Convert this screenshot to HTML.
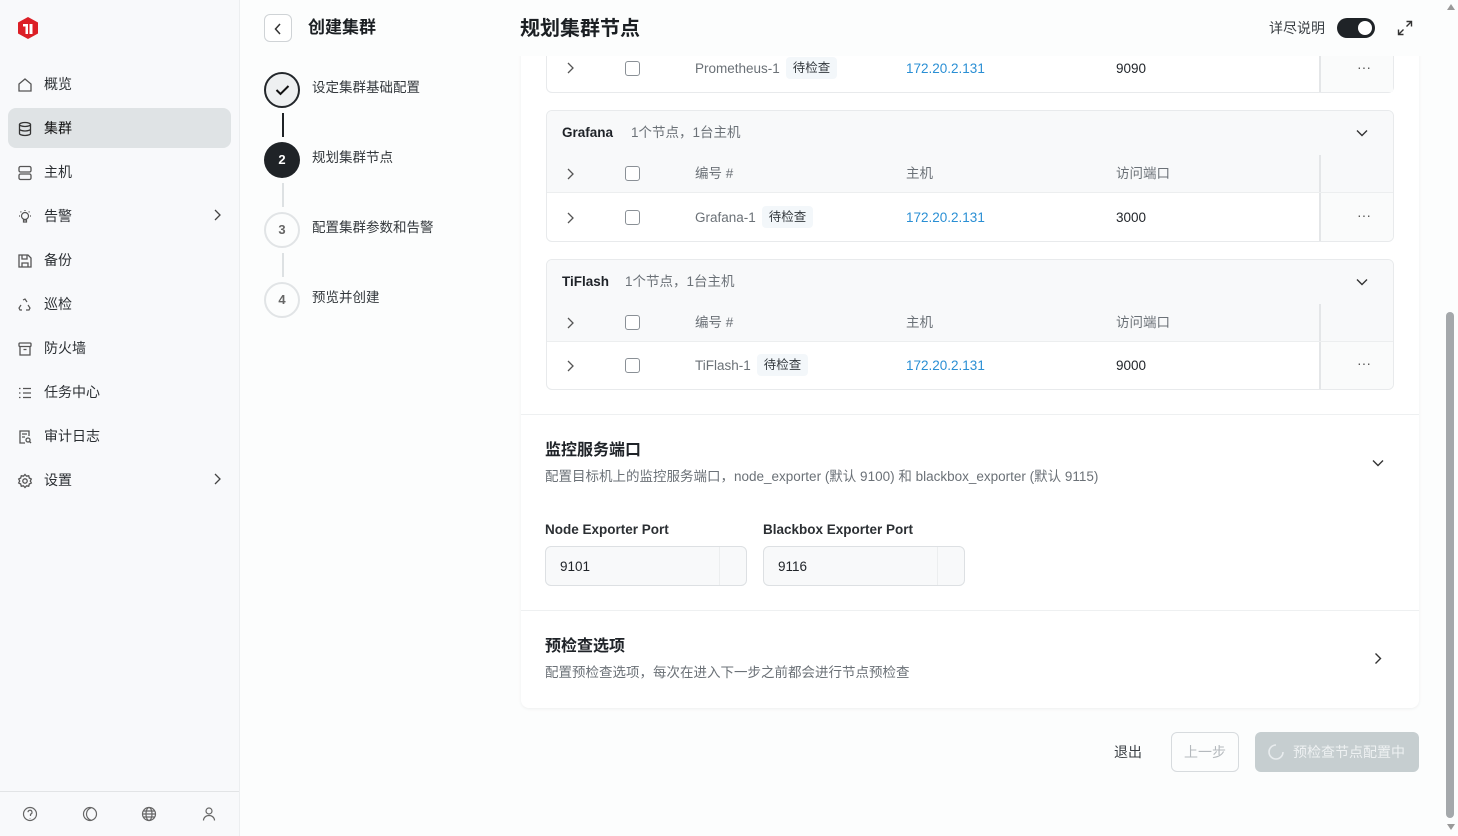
<!DOCTYPE html>
<html><head><meta charset="utf-8"><style>
*{box-sizing:border-box;margin:0;padding:0}
body{width:1458px;height:836px;overflow:hidden;background:#fcfdfd;font-family:"Liberation Sans","Noto Sans CJK SC",sans-serif;color:#1f2328;position:relative;font-size:14px}
.a{position:absolute}
.side{left:0;top:0;width:240px;height:836px;background:#f8f9fb;border-right:1px solid #eceef0}
.nav{left:8px;width:223px;height:40px;border-radius:8px;display:flex;align-items:center;padding-left:36px;font-size:14px;color:#2b2f33}
.nav svg{position:absolute;left:9px;top:13px}
.nav .chev{left:auto;right:10px}
.card{background:#fff;border:1px solid #e8eaec;border-radius:6px}
.muted{color:#6b7177}
.blue{color:#2a8fd4}
.tag{display:inline-block;background:#f3f7fa;border-radius:4px;padding:2px 7px;font-size:12.5px;color:#33383d;margin-left:6px;line-height:18px;vertical-align:top}
.cb{width:15px;height:15px;border:1px solid #8a9096;border-radius:3px;background:#fff}
.row{position:absolute;left:0;right:0;font-size:13.5px;line-height:18px}
.row > *{position:absolute}
.sticky{position:absolute;right:0;width:74px;top:0;bottom:0;border-left:2px solid #e4e6e8}
.dots{position:absolute;left:36px;color:#555;font-size:14px;line-height:10px}
</style></head><body>
<div class="a side">
 <svg class="a" style="left:17px;top:16px" width="22" height="24" viewBox="0 0 22 24"><path d="M11 1 L21 6.5 V17.5 L11 23 L1 17.5 V6.5Z" fill="#dc1f26"/><path d="M6 8 H11 V18 H8.5 V10.5 H6Z M12.5 8 H15.5 V18 H12.5Z" fill="#fff"/></svg>
 <div class="a nav" style="top:64px"><svg width="16" height="16" viewBox="0 0 16 16" fill="none" stroke="#555" stroke-width="1.3"><path d="M2 7 L8 2 L14 7 V14 H2Z"/></svg>概览</div>
 <div class="a nav" style="top:108px;background:#dfe3e5;color:#111"><svg width="16" height="16" viewBox="0 0 16 16" fill="none" stroke="#333" stroke-width="1.3"><ellipse cx="8" cy="3.5" rx="5.5" ry="2"/><path d="M2.5 3.5V12.5c0 1.1 2.5 2 5.5 2s5.5-.9 5.5-2V3.5M2.5 8c0 1.1 2.5 2 5.5 2s5.5-.9 5.5-2"/></svg>集群</div>
 <div class="a nav" style="top:152px"><svg width="16" height="16" viewBox="0 0 16 16" fill="none" stroke="#555" stroke-width="1.3"><rect x="2" y="1.5" width="12" height="5.5" rx="1.5"/><rect x="2" y="9" width="12" height="5.5" rx="1.5"/></svg>主机</div>
 <div class="a nav" style="top:196px"><svg width="16" height="16" viewBox="0 0 16 16" fill="none" stroke="#555" stroke-width="1.2"><circle cx="8" cy="7" r="3.5"/><path d="M6.5 11h3v2h-3z M8 1v1 M2 7h1 M13 7h1 M3.5 2.5l.8.8 M12.5 2.5l-.8.8"/></svg>告警<svg class="chev" width="8" height="12" viewBox="0 0 8 12" fill="none" stroke="#444" stroke-width="1.3"><path d="M2 1l5 5-5 5"/></svg></div>
 <div class="a nav" style="top:240px"><svg width="16" height="16" viewBox="0 0 16 16" fill="none" stroke="#555" stroke-width="1.3"><path d="M2 2h9l3 3v9H2z M5 2v4h5V2 M5 14v-4h6v4"/></svg>备份</div>
 <div class="a nav" style="top:284px"><svg width="16" height="16" viewBox="0 0 16 16" fill="none" stroke="#555" stroke-width="1.2"><path d="M6 3l2-1 2 3 M11 8l2 3-1 2h-3 M5 13H3l-1-2 2-3"/></svg>巡检</div>
 <div class="a nav" style="top:328px"><svg width="16" height="16" viewBox="0 0 16 16" fill="none" stroke="#555" stroke-width="1.3"><rect x="2" y="2" width="12" height="3.5" rx="1"/><path d="M3 5.5V14h10V5.5 M6.5 8.5h3"/></svg>防火墙</div>
 <div class="a nav" style="top:372px"><svg width="16" height="16" viewBox="0 0 16 16" fill="none" stroke="#555" stroke-width="1.3"><path d="M2 3.5h1.5M2 8h1.5M2 12.5h1.5M6 3.5h8M6 8h8M6 12.5h8"/></svg>任务中心</div>
 <div class="a nav" style="top:416px"><svg width="16" height="16" viewBox="0 0 16 16" fill="none" stroke="#555" stroke-width="1.3"><path d="M8 14H3V2h9v5 M5 5h5M5 8h3"/><circle cx="11" cy="11" r="2"/><path d="M12.5 12.5l1.5 1.5"/></svg>审计日志</div>
 <div class="a nav" style="top:460px"><svg width="16" height="16" viewBox="0 0 16 16" fill="none" stroke="#555" stroke-width="1.3"><circle cx="8" cy="8" r="2.2"/><path d="M8 1.5l1.5 1.7 2.2-.4.6 2.2 2 1-1 2 1 2-2 1-.6 2.2-2.2-.4L8 14.5l-1.5-1.7-2.2.4-.6-2.2-2-1 1-2-1-2 2-1 .6-2.2 2.2.4z"/></svg>设置<svg class="chev" width="8" height="12" viewBox="0 0 8 12" fill="none" stroke="#444" stroke-width="1.3"><path d="M2 1l5 5-5 5"/></svg></div>
 <div class="a" style="left:0;top:791px;width:239px;border-top:1px solid #e2e4e6"></div>
 <svg class="a" style="left:22px;top:806px" width="16" height="16" viewBox="0 0 16 16" fill="none" stroke="#666" stroke-width="1.2"><circle cx="8" cy="8" r="6.5"/><path d="M6 6.2a2 2 0 1 1 2.5 2V10 M8 12v.5"/></svg>
 <svg class="a" style="left:82px;top:806px" width="16" height="16" viewBox="0 0 16 16" fill="none" stroke="#666" stroke-width="1.2"><circle cx="8" cy="8" r="6.5"/><path d="M9 1.8a6.5 6.5 0 0 0 0 12.4"/></svg>
 <svg class="a" style="left:141px;top:806px" width="16" height="16" viewBox="0 0 16 16" fill="none" stroke="#666" stroke-width="1.2"><circle cx="8" cy="8" r="6.5"/><ellipse cx="8" cy="8" rx="3" ry="6.5"/><path d="M1.5 8h13M2.5 5h11M2.5 11h11"/></svg>
 <svg class="a" style="left:201px;top:806px" width="16" height="16" viewBox="0 0 16 16" fill="none" stroke="#666" stroke-width="1.2"><circle cx="8" cy="5" r="3"/><path d="M2.5 14.5c0-3 2.5-5 5.5-5s5.5 2 5.5 5"/></svg>
</div>

<div class="a" style="left:264px;top:14px;width:28px;height:28px;border:1px solid #cfd3d6;border-radius:6px;background:#fff"><svg style="position:absolute;left:9px;top:8px" width="8" height="12" viewBox="0 0 8 12" fill="none" stroke="#333" stroke-width="1.5"><path d="M6 1L1.5 6 6 11"/></svg></div>
<div class="a" style="left:308px;top:16px;font-size:17px;line-height:24px;font-weight:bold;color:#1b1f23">创建集群</div>
<div class="a" style="left:264px;top:72px;width:36px;height:36px;border:2px solid #23272b;border-radius:50%;background:#eef0f1"><svg style="position:absolute;left:9px;top:10px" width="15" height="12" viewBox="0 0 15 12" fill="none" stroke="#111" stroke-width="2"><path d="M1.5 6l4 4 8-8"/></svg></div>
<div class="a" style="left:282px;top:113px;width:2px;height:24px;background:#1f2327"></div>
<div class="a" style="left:264px;top:142px;width:36px;height:36px;border-radius:50%;background:#1f2327;color:#fff;font-weight:bold;text-align:center;line-height:36px;font-size:13px">2</div>
<div class="a" style="left:282px;top:183px;width:2px;height:24px;background:#dde1e3"></div>
<div class="a" style="left:264px;top:212px;width:36px;height:36px;border-radius:50%;border:2px solid #e1e4e6;color:#666;font-weight:bold;text-align:center;line-height:32px;font-size:13px">3</div>
<div class="a" style="left:282px;top:253px;width:2px;height:24px;background:#dde1e3"></div>
<div class="a" style="left:264px;top:282px;width:36px;height:36px;border-radius:50%;border:2px solid #e1e4e6;color:#666;font-weight:bold;text-align:center;line-height:32px;font-size:13px">4</div>
<div class="a" style="left:312px;top:79px;font-size:13.5px;line-height:18px;color:#33383c">设定集群基础配置</div>
<div class="a" style="left:312px;top:149px;font-size:13.5px;line-height:18px;color:#33383c">规划集群节点</div>
<div class="a" style="left:312px;top:219px;font-size:13.5px;line-height:18px;color:#33383c">配置集群参数和告警</div>
<div class="a" style="left:312px;top:289px;font-size:13.5px;line-height:18px;color:#33383c">预览并创建</div>

<div class="a" style="left:521px;top:40px;width:898px;height:668px;background:#fff;border-radius:0 0 8px 8px;box-shadow:0 1px 3px rgba(0,0,0,.06)"></div>

<div class="a card" style="left:546px;top:30px;width:848px;height:63px;border-top:none;border-radius:0 0 6px 6px">
 <div class="row" style="top:24px;height:30px">
  <svg style="left:19px;top:8px" width="8" height="12" viewBox="0 0 8 12" fill="none" stroke="#555" stroke-width="1.3"><path d="M2 1l5 5-5 5"/></svg>
  <div class="cb" style="left:78px;top:7px"></div>
  <div class="muted" style="left:148px;top:6px">Prometheus-1<span class="tag" style="margin-top:-3px">待检查</span></div>
  <div class="blue" style="left:359px;top:6px">172.20.2.131</div>
  <div style="left:569px;top:6px">9090</div>
 </div>
 <div class="sticky" style="top:25px;background:#fafbfb"><span class="dots" style="top:7px">···</span></div>
</div>

<div class="a" style="left:500px;top:0;width:940px;height:56px;background:#fcfdfd"></div>
<div class="a" style="left:520px;top:15px;font-size:20px;line-height:28px;font-weight:bold;color:#1b1f23">规划集群节点</div>
<div class="a" style="left:1269px;top:18px;font-size:14px;line-height:20px;color:#3a3f44">详尽说明</div>
<div class="a" style="left:1337px;top:18px;width:38px;height:20px;border-radius:10px;background:#1f2327"><div style="position:absolute;right:3px;top:3px;width:14px;height:14px;border-radius:50%;background:#fff"></div></div>
<svg class="a" style="left:1397px;top:20px" width="16" height="16" viewBox="0 0 16 16" fill="none" stroke="#333" stroke-width="1.4"><path d="M9.5 1.5h5v5M14.5 1.5l-5 5M6.5 14.5h-5v-5M1.5 14.5l5-5"/></svg>

<div class="a card" style="left:546px;top:110px;width:848px;height:132px;overflow:hidden">
 <div class="a" style="left:0;top:0;right:0;height:44px;background:#f8f9fa"></div>
 <div class="a" style="left:15px;top:13px;font-size:13.5px;line-height:18px;font-weight:bold">Grafana</div>
 <div class="a muted" style="left:84px;top:13px;font-size:13.5px;line-height:18px">1个节点，1台主机</div>
 <svg class="a" style="left:809px;top:18px" width="12" height="8" viewBox="0 0 12 8" fill="none" stroke="#333" stroke-width="1.4"><path d="M1 1.5l5 5 5-5"/></svg>
 <div class="row" style="top:44px;height:38px;background:#f8f9fa;border-bottom:1px solid #eceeef">
  <svg style="left:19px;top:13px" width="8" height="12" viewBox="0 0 8 12" fill="none" stroke="#555" stroke-width="1.3"><path d="M2 1l5 5-5 5"/></svg>
  <div class="cb" style="left:78px;top:11px"></div>
  <div class="muted" style="left:148px;top:10px">编号 #</div>
  <div class="muted" style="left:359px;top:10px">主机</div>
  <div class="muted" style="left:569px;top:10px">访问端口</div>
  <div class="sticky" style="position:absolute"></div>
 </div>
 <div class="row" style="top:82px;height:50px">
  <svg style="left:19px;top:19px" width="8" height="12" viewBox="0 0 8 12" fill="none" stroke="#555" stroke-width="1.3"><path d="M2 1l5 5-5 5"/></svg>
  <div class="cb" style="left:78px;top:17px"></div>
  <div class="muted" style="left:148px;top:16px">Grafana-1<span class="tag" style="margin-top:-3px">待检查</span></div>
  <div class="blue" style="left:359px;top:16px">172.20.2.131</div>
  <div style="left:569px;top:16px">3000</div>
  <div class="sticky" style="position:absolute;background:#fafbfb"><span class="dots" style="top:17px">···</span></div>
 </div>
</div>

<div class="a card" style="left:546px;top:259px;width:848px;height:131px;overflow:hidden">
 <div class="a" style="left:0;top:0;right:0;height:44px;background:#f8f9fa"></div>
 <div class="a" style="left:15px;top:13px;font-size:13.5px;line-height:18px;font-weight:bold">TiFlash</div>
 <div class="a muted" style="left:78px;top:13px;font-size:13.5px;line-height:18px">1个节点，1台主机</div>
 <svg class="a" style="left:809px;top:18px" width="12" height="8" viewBox="0 0 12 8" fill="none" stroke="#333" stroke-width="1.4"><path d="M1 1.5l5 5 5-5"/></svg>
 <div class="row" style="top:44px;height:38px;background:#f8f9fa;border-bottom:1px solid #eceeef">
  <svg style="left:19px;top:13px" width="8" height="12" viewBox="0 0 8 12" fill="none" stroke="#555" stroke-width="1.3"><path d="M2 1l5 5-5 5"/></svg>
  <div class="cb" style="left:78px;top:11px"></div>
  <div class="muted" style="left:148px;top:10px">编号 #</div>
  <div class="muted" style="left:359px;top:10px">主机</div>
  <div class="muted" style="left:569px;top:10px">访问端口</div>
  <div class="sticky" style="position:absolute"></div>
 </div>
 <div class="row" style="top:82px;height:49px">
  <svg style="left:19px;top:18px" width="8" height="12" viewBox="0 0 8 12" fill="none" stroke="#555" stroke-width="1.3"><path d="M2 1l5 5-5 5"/></svg>
  <div class="cb" style="left:78px;top:16px"></div>
  <div class="muted" style="left:148px;top:15px">TiFlash-1<span class="tag" style="margin-top:-3px">待检查</span></div>
  <div class="blue" style="left:359px;top:15px">172.20.2.131</div>
  <div style="left:569px;top:15px">9000</div>
  <div class="sticky" style="position:absolute;background:#fafbfb"><span class="dots" style="top:16px">···</span></div>
 </div>
</div>

<div class="a" style="left:521px;top:414px;width:898px;border-top:1px solid #eef0f1"></div>
<div class="a" style="left:545px;top:440px;font-size:16px;line-height:22px;font-weight:bold">监控服务端口</div>
<div class="a muted" style="left:545px;top:468px;font-size:13.5px;line-height:18px">配置目标机上的监控服务端口，node_exporter (默认 9100) 和 blackbox_exporter (默认 9115)</div>
<svg class="a" style="left:1372px;top:459px" width="12" height="8" viewBox="0 0 12 8" fill="none" stroke="#333" stroke-width="1.4"><path d="M1 1.5l5 5 5-5"/></svg>
<div class="a" style="left:545px;top:521px;font-size:13.5px;line-height:18px;font-weight:bold;color:#2b2f33">Node Exporter Port</div>
<div class="a" style="left:763px;top:521px;font-size:13.5px;line-height:18px;font-weight:bold;color:#2b2f33">Blackbox Exporter Port</div>
<div class="a" style="left:545px;top:546px;width:202px;height:40px;border:1px solid #dde0e3;border-radius:6px;background:#f8f9fa"><span style="position:absolute;left:14px;top:11px;font-size:13.5px;line-height:18px">9101</span><div style="position:absolute;right:0;top:0;width:27px;height:38px;border-left:1px solid #eceeef"></div></div>
<div class="a" style="left:763px;top:546px;width:202px;height:40px;border:1px solid #dde0e3;border-radius:6px;background:#f8f9fa"><span style="position:absolute;left:14px;top:11px;font-size:13.5px;line-height:18px">9116</span><div style="position:absolute;right:0;top:0;width:27px;height:38px;border-left:1px solid #eceeef"></div></div>
<div class="a" style="left:521px;top:610px;width:898px;border-top:1px solid #eef0f1"></div>
<div class="a" style="left:545px;top:636px;font-size:16px;line-height:22px;font-weight:bold">预检查选项</div>
<div class="a muted" style="left:545px;top:664px;font-size:13.5px;line-height:18px">配置预检查选项，每次在进入下一步之前都会进行节点预检查</div>
<svg class="a" style="left:1374px;top:652px" width="8" height="13" viewBox="0 0 8 13" fill="none" stroke="#333" stroke-width="1.4"><path d="M1.5 1.5l5 5-5 5"/></svg>

<div class="a" style="left:1114px;top:742px;font-size:14px;line-height:20px;color:#3a3f44">退出</div>
<div class="a" style="left:1171px;top:732px;width:68px;height:40px;border:1px solid #d7dbde;border-radius:6px;color:#b4b9bd;text-align:center;line-height:38px;font-size:14px;background:#fcfdfd">上一步</div>
<div class="a" style="left:1255px;top:732px;width:164px;height:40px;border-radius:6px;background:#c6ced0;color:#eef1f2;font-size:14px;line-height:40px;padding-left:38px">预检查节点配置中</div>
<svg class="a" style="left:1267px;top:743px" width="18" height="18" viewBox="0 0 18 18" fill="none" stroke="#e8ecee" stroke-width="1.6"><path d="M9 2a7 7 0 1 0 7 7"/></svg>

<div class="a" style="left:1446px;top:312px;width:8px;height:506px;border-radius:4px;background:#a4a8ab"></div>
<div class="a" style="left:1447px;top:4px;width:0;height:0;border-left:4px solid transparent;border-right:4px solid transparent;border-bottom:6px solid #999"></div>
<div class="a" style="left:1447px;top:824px;width:0;height:0;border-left:4px solid transparent;border-right:4px solid transparent;border-top:6px solid #999"></div>
</body></html>
